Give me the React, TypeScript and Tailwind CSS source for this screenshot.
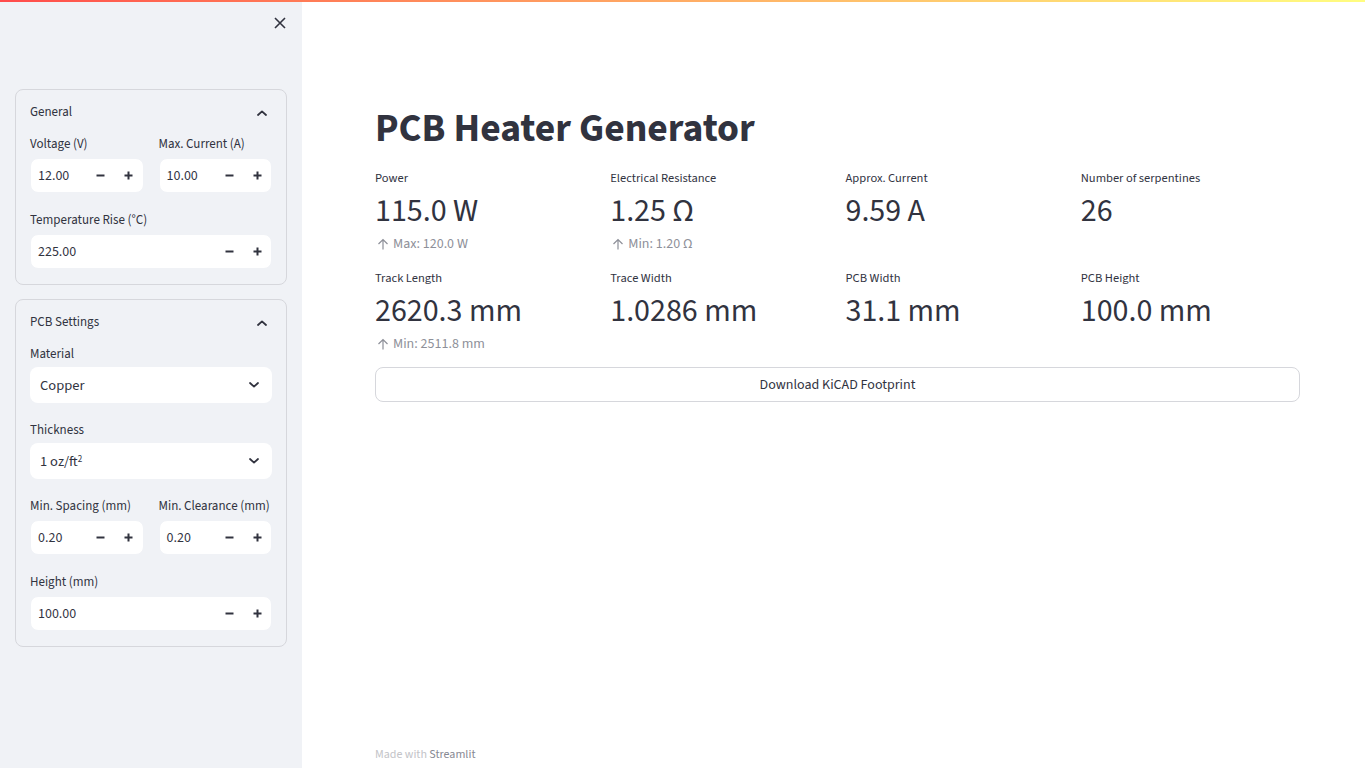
import React from 'react';

const FONT = { fontFamily: '"Source Sans Pro", "Source Sans 3", Lato, "Noto Sans", sans-serif' };

const Minus = () => (
  <svg width="9" height="9" viewBox="0 0 9 9" className="text-[#31333f]">
    <path d="M0.5 4.5h8" stroke="currentColor" strokeWidth="2" />
  </svg>
);

const Plus = () => (
  <svg width="9" height="9" viewBox="0 0 9 9" className="text-[#31333f]">
    <path d="M0.5 4.5h8M4.5 0.5v8" stroke="currentColor" strokeWidth="2" />
  </svg>
);

const ChevronUp = () => (
  <svg width="10" height="6" viewBox="0 0 10 6" fill="none">
    <path d="M1 5l4-3.6L9 5" stroke="#31333f" strokeWidth="1.8" strokeLinecap="round" strokeLinejoin="round" />
  </svg>
);

const ChevronDown = () => (
  <svg width="10" height="6" viewBox="0 0 10 6" fill="none">
    <path d="M1 1l4 3.6L9 1" stroke="#31333f" strokeWidth="1.8" strokeLinecap="round" strokeLinejoin="round" />
  </svg>
);

const ArrowUp = () => (
  <svg width="12" height="12" viewBox="0 0 12 12" fill="none">
    <path d="M6 11.5V1.5M1.5 6L6 1.5 10.5 6" stroke="#8e9099" strokeWidth="1.2" />
  </svg>
);

type NumProps = { label: string; value: string };

const NumberInput = ({ label, value }: NumProps) => (
  <div className="flex flex-col">
    <label className="h-5 mb-1 text-[13px] leading-5 text-[#31333f] whitespace-nowrap">{label}</label>
    <div className="h-[35px] flex items-center bg-white rounded-lg border border-[#f0f2f6]">
      <span className="flex-1 pl-[7px] pt-[2px] text-[14px] text-[#31333f]">{value}</span>
      <span className="w-7 h-full flex items-center justify-center"><Minus /></span>
      <span className="w-7 h-full flex items-center justify-center"><Plus /></span>
    </div>
  </div>
);

const SelectBox = ({ label, children }: { label: string; children: React.ReactNode }) => (
  <div className="flex flex-col">
    <label className="h-5 mb-[3px] text-[13px] leading-5 text-[#31333f]">{label}</label>
    <div className="h-9 flex items-center bg-white rounded-lg pl-[10px] pr-[13px]">
      <span className="flex-1 pt-[2px] text-[14.5px] text-[#31333f]">{children}</span>
      <ChevronDown />
    </div>
  </div>
);

const Expander = ({ title, children }: { title: string; children: React.ReactNode }) => (
  <div className="border border-[#d6d7dc] rounded-lg">
    <div className="h-[44px] pt-[1px] px-[14px] flex items-center justify-between">
      <span className="text-[13px] text-[#31333f]">{title}</span>
      <span className="pr-[5px]"><ChevronUp /></span>
    </div>
    <div className="px-[14px] pb-[15px] flex flex-col gap-[17px]">{children}</div>
  </div>
);

type MetricProps = { label: string; value: string; delta?: string };

const Metric = ({ label, value, delta }: MetricProps) => (
  <div className="flex flex-col">
    <span className="h-5 text-[12.5px] leading-5 text-[#31333f]">{label}</span>
    <span className="h-[46px] text-[32px] leading-[46px] text-[#31333f] whitespace-nowrap">{value}</span>
    <span className="h-5 flex items-center gap-[4px] text-[14px] text-[#8e9099]">
      {delta && (
        <>
          <span className="pl-[2px]"><ArrowUp /></span>
          {delta}
        </>
      )}
    </span>
  </div>
);

export default function App() {
  return (
    <div className="relative w-full h-screen flex overflow-hidden bg-white" style={FONT}>
      <div className="absolute top-0 left-0 right-0 h-[2px] bg-gradient-to-r from-[#ff4b4b] to-[#fffd80] z-10" />

      <aside className="w-[302px] h-full bg-[#f0f2f6] px-[15px] flex flex-col shrink-0">
        <div className="h-[46px] flex items-center justify-end">
          <svg width="12" height="12" viewBox="0 0 12 12" className="mr-[1px]">
            <path d="M1 1l10 10M11 1L1 11" stroke="#31333f" strokeWidth="1.6" />
          </svg>
        </div>
        <div className="mt-[43px] flex flex-col gap-[14px]">
          <Expander title="General">
            <div className="grid grid-cols-2 gap-[15px]">
              <NumberInput label="Voltage (V)" value="12.00" />
              <NumberInput label="Max. Current (A)" value="10.00" />
            </div>
            <NumberInput label="Temperature Rise (°C)" value="225.00" />
          </Expander>
          <Expander title="PCB Settings">
            <SelectBox label="Material">Copper</SelectBox>
            <SelectBox label="Thickness">
              1 oz/ft<sup className="text-[9px]">2</sup>
            </SelectBox>
            <div className="grid grid-cols-2 gap-[15px]">
              <NumberInput label="Min. Spacing (mm)" value="0.20" />
              <NumberInput label="Min. Clearance (mm)" value="0.20" />
            </div>
            <NumberInput label="Height (mm)" value="100.00" />
          </Expander>
        </div>
      </aside>

      <main className="flex-1 h-full flex flex-col pl-[73px]">
        <div className="w-[925px] flex flex-col flex-1">
          <h1 className="mt-[102px] h-[53px] text-[39.6px] leading-[53px] font-bold text-[#31333f]">
            PCB Heater Generator
          </h1>
          <div className="mt-[13px] grid grid-cols-4 gap-x-4 gap-y-[14px]">
            <Metric label="Power" value="115.0 W" delta="Max: 120.0 W" />
            <Metric label="Electrical Resistance" value="1.25 Ω" delta="Min: 1.20 Ω" />
            <Metric label="Approx. Current" value="9.59 A" />
            <Metric label="Number of serpentines" value="26" />
            <Metric label="Track Length" value="2620.3 mm" delta="Min: 2511.8 mm" />
            <Metric label="Trace Width" value="1.0286 mm" />
            <Metric label="PCB Width" value="31.1 mm" />
            <Metric label="PCB Height" value="100.0 mm" />
          </div>
          <button className="mt-[13px] h-[35px] w-full rounded-lg border border-[#d6d7dc] bg-white pt-[1px] text-[14px] text-[#31333f]">
            Download KiCAD Footprint
          </button>
          <div className="mt-auto mb-[5px] text-[12px] leading-4 text-[#c3c4c8]">
            Made with <span className="text-[#878993]">Streamlit</span>
          </div>
        </div>
      </main>
    </div>
  );
}
